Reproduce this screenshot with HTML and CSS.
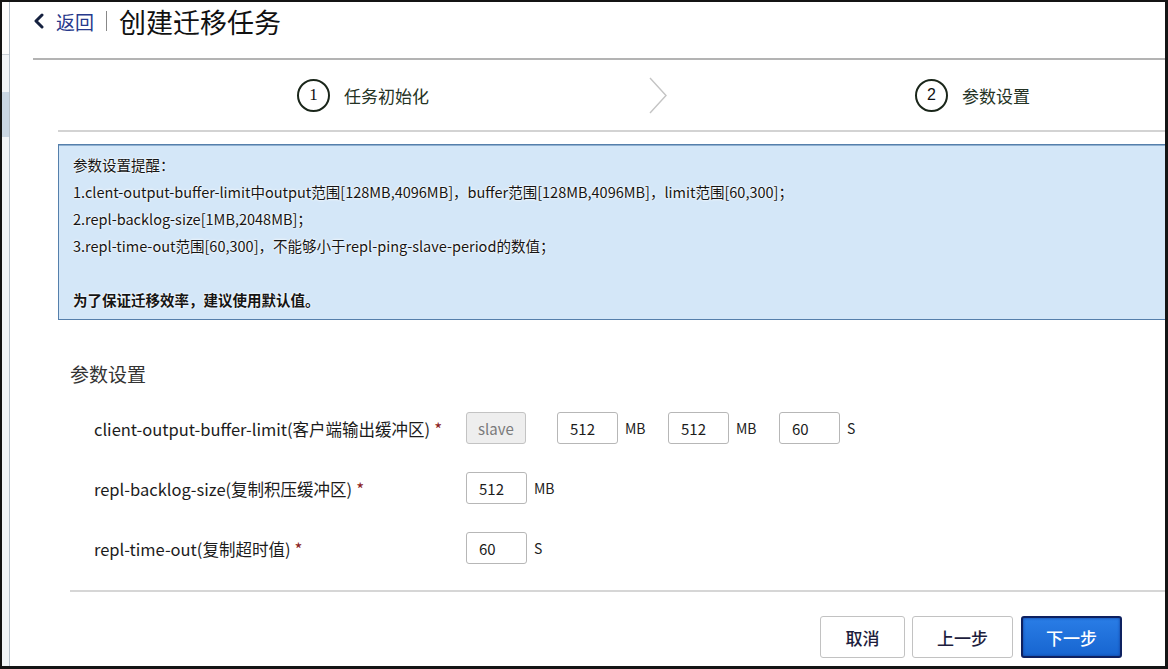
FILE: index.html
```html
<!DOCTYPE html>
<html lang="zh-CN">
<head>
<meta charset="utf-8">
<title>创建迁移任务</title>
<link rel="stylesheet" href="styles.css">
</head>
<body>
<div class="frame">
  <aside class="sidebar">
    <div class="sb-top"></div>
    <div class="sb-gap"></div>
    <div class="sb-active"></div>
  </aside>
  <main class="main">
    <header class="header">
      <svg class="back-icon" width="12" height="16" viewBox="0 0 12 16"><path d="M9 2 L3 8 L9 14" fill="none" stroke="#15213f" stroke-width="3" stroke-linecap="round" stroke-linejoin="round"/></svg>
      <a class="back-link">返回</a>
      <span class="sep"></span>
      <h1 class="title">创建迁移任务</h1>
    </header>

    <div class="steps">
      <div class="step step-1">
        <span class="step-num">1</span>
        <span class="step-text">任务初始化</span>
      </div>
      <svg class="step-arrow" width="20" height="37" viewBox="0 0 20 37"><path d="M2 1 L18 18.5 L2 36" fill="none" stroke="#c4c4c4" stroke-width="1.4"/></svg>
      <div class="step step-2">
        <span class="step-num">2</span>
        <span class="step-text">参数设置</span>
      </div>
    </div>

    <div class="notice">
      <p>参数设置提醒：</p>
      <p>1.clent-output-buffer-limit中output范围[128MB,4096MB]，buffer范围[128MB,4096MB]，limit范围[60,300]；</p>
      <p>2.repl-backlog-size[1MB,2048MB]；</p>
      <p>3.repl-time-out范围[60,300]，不能够小于repl-ping-slave-period的数值；</p>
      <p>&nbsp;</p>
      <p class="strong">为了保证迁移效率，建议使用默认值。</p>
    </div>

    <h2 class="section-title">参数设置</h2>

    <div class="form">
      <label class="label">client-output-buffer-limit(客户端输出缓冲区)<span class="req">*</span></label>
      <div class="controls">
        <span class="slave-btn">slave</span>
        <div class="pair"><span class="input">512</span><span class="unit">MB</span></div>
        <div class="pair"><span class="input">512</span><span class="unit">MB</span></div>
        <div class="pair"><span class="input">60</span><span class="unit">S</span></div>
      </div>

      <label class="label">repl-backlog-size(复制积压缓冲区)<span class="req">*</span></label>
      <div class="controls">
        <div class="pair"><span class="input">512</span><span class="unit">MB</span></div>
      </div>

      <label class="label">repl-time-out(复制超时值)<span class="req">*</span></label>
      <div class="controls">
        <div class="pair"><span class="input">60</span><span class="unit">S</span></div>
      </div>
    </div>

    <footer class="footer">
      <button class="btn btn-cancel">取消</button>
      <button class="btn btn-prev">上一步</button>
      <button class="btn btn-next">下一步</button>
    </footer>
  </main>
</div>
</body>
</html>
```

FILE: styles.css
```css
* { box-sizing: border-box; }
html, body { margin: 0; padding: 0; background: #ffffff; }
body {
  font-family: "Noto Sans CJK SC", "Noto Sans", sans-serif;
  color: #222;
  overflow: hidden;
}
.frame {
  width: 1168px;
  height: 669px;
  border-style: solid;
  border-color: #141414;
  border-width: 2px 3px 3px 2px;
  display: flex;
  overflow: hidden;
  background: #fff;
}
.sidebar {
  width: 8px;
  flex: none;
  background: #f2f5f8;
  border-right: 1px solid #b7c1cb;
  display: flex;
  flex-direction: column;
}
.sb-top { height: 53px; background: #fdfdfd; border-bottom: 1px solid #c9d0d7; }
.sb-gap { height: 37px; }
.sb-active { height: 45px; background: #c9d6e3; }

.main {
  flex: 1;
  min-width: 0;
  display: flex;
  flex-direction: column;
}

/* header */
.header {
  margin-left: 23px;
  height: 58px;
  padding-bottom: 18px;
  border-bottom: 2px solid #b3b3b3;
  display: flex;
  align-items: center;
}
.back-icon { margin-right: 11px; }
.back-link {
  font-size: 19px;
  color: #27398c;
  line-height: 1;
}
.sep {
  width: 1px;
  height: 20px;
  background: #888;
  margin: 0 12px 0 12px;
}
.title {
  margin: 0;
  font-size: 27px;
  font-weight: 400;
  color: #111;
  line-height: 1;
}

/* steps */
.steps {
  margin-left: 48px;
  height: 72px;
  border-bottom: 2px solid #d3d3d3;
  display: flex;
  align-items: center;
}
.step { display: flex; align-items: center; gap: 14px; }
.step-1 { margin-left: 239px; }
.step-arrow { margin-left: 219px; }
.step-2 { margin-left: 247px; }
.step-num {
  width: 33px;
  height: 33px;
  border: 2px solid #1a261a;
  border-radius: 50%;
  display: flex;
  align-items: center;
  justify-content: center;
  font-family: "Liberation Serif", serif;
  font-size: 17px;
  color: #111;
}
.step-2 .step-num { font-family: "Liberation Sans", sans-serif; font-size: 16px; }
.step-text {
  font-size: 17px;
  color: #243224;
}

/* notice */
.notice {
  margin: 12px 0 0 48px;
  height: 176px;
  background: #d4e7f8;
  border: 1px solid #557fab;
  border-right: none;
  box-shadow: inset 0 1px 0 #8fb0d0;
  padding: 6px 14px;
  font-size: 14.5px;
  line-height: 27px;
  color: #151515;
  text-shadow: 0 0 2px #fff, 0 0 3px #fff;
}
.notice p { margin: 0; white-space: nowrap; }
.notice .strong { font-weight: 700; }

/* section */
.section-title {
  margin: 40px 0 0 60px;
  font-size: 19px;
  font-weight: 400;
  line-height: 28px;
  color: #333;
}

.form {
  margin: 24px 0 0 84px;
  display: grid;
  grid-template-columns: 372px auto;
  row-gap: 28px;
  align-items: center;
}
.label {
  font-size: 16.5px;
  color: #1c1c1c;
  white-space: nowrap;
}
.req {
  color: #8c1f1f;
  margin-left: 4px;
  font-size: 17px;
}
.controls { display: flex; align-items: center; }
.slave-btn {
  width: 60px;
  height: 32px;
  margin-right: 31px;
  background: #eeeeee;
  border: 1px solid #c3c3c3;
  border-radius: 3px;
  color: #7a7a7a;
  font-size: 15px;
  display: flex;
  align-items: center;
  justify-content: center;
}
.pair {
  width: 111px;
  display: flex;
  align-items: center;
  gap: 7px;
}
.input {
  width: 61px;
  height: 32px;
  border: 1px solid #b7b7b7;
  border-radius: 3px;
  padding-left: 12px;
  display: flex;
  align-items: center;
  font-size: 15px;
  color: #1c1c1c;
}
.unit {
  font-size: 14px;
  color: #222;
}

/* footer */
.footer {
  margin: 26px 0 0 60px;
  border-top: 2px solid #d6d6d6;
  padding: 24px 43px 0 0;
  display: flex;
  justify-content: flex-end;
  gap: 7px;
}
.btn {
  height: 42px;
  border-radius: 3px;
  font-family: "Noto Sans CJK SC", sans-serif;
  font-size: 17px;
  font-weight: 500;
  cursor: pointer;
  padding: 0;
}
.btn-cancel {
  width: 85px;
  background: #fff;
  border: 1px solid #c2c2c2;
  color: #1d1d3d;
}
.btn-prev {
  width: 101px;
  background: #fff;
  border: 1px solid #c2c2c2;
  color: #1d1d3d;
}
.btn-next {
  width: 101px;
  margin-left: 1px;
  background: linear-gradient(#2a7de6, #1765d0);
  border: 2px solid #0e2160;
  box-shadow: inset 0 0 3px #0f3c9a;
  color: #fff;
}
```
